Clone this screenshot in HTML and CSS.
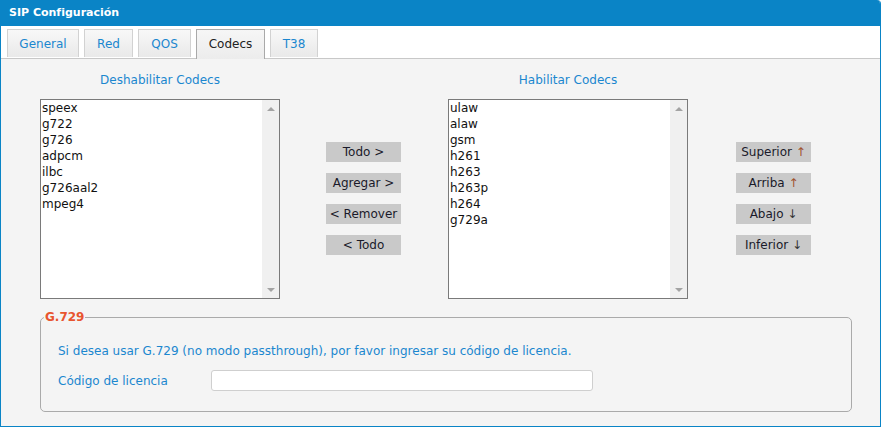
FILE: index.html
```html
<!DOCTYPE html>
<html lang="es">
<head>
    <meta charset="UTF-8">
    <meta name="viewport" content="width=device-width, initial-scale=1.0">
    <title>SIP Configuración</title>
    <link rel="stylesheet" href="styles.css">
</head>
<body>

    <div class="panel">
        <div class="panel-title">SIP Configuración</div>

        <!-- Tabs -->
        <ul class="tabs">
            <li class="tab">General</li>
            <li class="tab">Red</li>
            <li class="tab">QOS</li>
            <li class="tab active">Codecs</li>
            <li class="tab">T38</li>
        </ul>

        <div class="content">
            <!-- Codec lists -->
            <div class="codec-row">
                <div class="codec-col">
                    <div class="col-title">Deshabilitar Codecs</div>
                    <div class="codec-list">
                        <ul class="items">
                            <li>speex</li>
                            <li>g722</li>
                            <li>g726</li>
                            <li>adpcm</li>
                            <li>ilbc</li>
                            <li>g726aal2</li>
                            <li>mpeg4</li>
                        </ul>
                        <div class="scrollbar"><span class="arrow-up"></span><span class="arrow-down"></span></div>
                    </div>
                </div>

                <div class="btn-col">
                    <button class="move-btn">Todo &gt;</button>
                    <button class="move-btn">Agregar &gt;</button>
                    <button class="move-btn">&lt; Remover</button>
                    <button class="move-btn">&lt; Todo</button>
                </div>

                <div class="codec-col">
                    <div class="col-title">Habilitar Codecs</div>
                    <div class="codec-list">
                        <ul class="items">
                            <li>ulaw</li>
                            <li>alaw</li>
                            <li>gsm</li>
                            <li>h261</li>
                            <li>h263</li>
                            <li>h263p</li>
                            <li>h264</li>
                            <li>g729a</li>
                        </ul>
                        <div class="scrollbar"><span class="arrow-up"></span><span class="arrow-down"></span></div>
                    </div>
                </div>

                <div class="btn-col">
                    <button class="move-btn">Superior <span class="up">↑</span></button>
                    <button class="move-btn">Arriba <span class="up">↑</span></button>
                    <button class="move-btn">Abajo <span class="down">↓</span></button>
                    <button class="move-btn">Inferior <span class="down">↓</span></button>
                </div>
            </div>

            <!-- G.729 license -->
            <fieldset class="license">
                <legend>G.729</legend>
                <p class="note">Si desea usar G.729 (no modo passthrough), por favor ingresar su código de licencia.</p>
                <div class="field">
                    <label for="license-code">Código de licencia</label>
                    <input type="text" id="license-code">
                </div>
            </fieldset>
        </div>
    </div>

</body>
</html>
```

FILE: styles.css
```css
/* General */
body {
    font-family: 'DejaVu Sans', Verdana, sans-serif;
    font-size: 12px;
    margin: 0;
    padding: 0;
    background: #fff;
    color: #222;
}

.panel {
    width: 879px;
    height: 426px;
    border: 1px solid #0a84c6;
    border-top: none;
    border-radius: 0 4px 0 0;
    background: #f4f4f4;
    overflow: hidden;
}

.panel-title {
    height: 26px;
    line-height: 26px;
    padding-left: 8px;
    background: #0a84c6;
    color: #fff;
    font-weight: bold;
    font-size: 11px;
}

/* Tabs */
.tabs {
    display: flex;
    gap: 5px;
    list-style: none;
    margin: 0;
    padding: 3px 0 0 6px;
    height: 29px;
    background: #fff;
    border-bottom: 1px solid #c8c8c8;
}

.tab {
    height: 28px;
    line-height: 29px;
    padding: 0;
    text-align: center;
    border: 1px solid #d2d2d2;
    border-bottom: none;
    background: linear-gradient(#f8f8f8, #e9e9e9);
    color: #1b87cf;
    box-sizing: border-box;
}

.tab:nth-child(1) { width: 72px; }
.tab:nth-child(2) { width: 49px; }
.tab:nth-child(3) { width: 53px; }
.tab:nth-child(4) { width: 69px; }
.tab:nth-child(5) { width: 48px; }

.tab.active {
    height: 30px;
    border-color: #a9a9a9;
    background: linear-gradient(#f6f6f6, #ececec);
    color: #222;
    margin-bottom: -1px;
}

/* Codec lists */
.content {
    padding: 14px 0 0 39px;
}

.codec-row {
    display: flex;
    align-items: flex-start;
}

.codec-col {
    width: 240px;
}

.col-title {
    height: 14px;
    line-height: 14px;
    text-align: center;
    color: #1b87cf;
    margin-bottom: 12px;
}

.codec-list {
    display: flex;
    height: 198px;
    border: 1px solid #7a7a7a;
    background: #fff;
}

.items {
    flex: 1;
    list-style: none;
    margin: 0;
    padding: 0 1px;
}

.items li {
    height: 16px;
    line-height: 16px;
    color: #111;
}

.scrollbar {
    width: 17px;
    background: #f0f0f0;
    display: flex;
    flex-direction: column;
    justify-content: space-between;
    align-items: center;
    padding: 7px 0 6px;
}

.arrow-up,
.arrow-down {
    width: 0;
    height: 0;
    border-left: 4px solid transparent;
    border-right: 4px solid transparent;
}

.arrow-up {
    border-bottom: 4px solid #a3a3a3;
}

.arrow-down {
    border-top: 4px solid #a3a3a3;
}

/* Move buttons */
.btn-col {
    display: flex;
    flex-direction: column;
    gap: 11px;
    width: 75px;
    margin: 69px 47px 0 46px;
}

.btn-col:last-child {
    margin: 69px 0 0 48px;
}

.move-btn {
    height: 20px;
    padding: 0;
    border: none;
    background: #c9c9c9;
    font-family: 'DejaVu Sans', Verdana, sans-serif;
    font-size: 12px;
    color: #1a1a2a;
    white-space: nowrap;
    cursor: pointer;
}

.move-btn .up {
    color: #a0522d;
}

.move-btn .down {
    color: #333;
}

/* G.729 fieldset */
.license {
    width: 812px;
    height: 102px;
    box-sizing: border-box;
    margin: 11px 0 0 0;
    padding: 0 0 0 17px;
    border: 1px solid #aaa;
    border-radius: 5px;
}

.license legend {
    padding: 0 1px;
    margin-left: -14px;
    color: #e8552f;
    font-weight: bold;
    font-size: 12px;
}

.note {
    margin: 20px 0 0;
    line-height: 14px;
    color: #1b87cf;
}

.field {
    display: flex;
    align-items: center;
    margin-top: 12px;
}

.field label {
    width: 153px;
    color: #1b87cf;
}

.field input {
    width: 382px;
    height: 21px;
    box-sizing: border-box;
    border: 1px solid #cfcfcf;
    border-radius: 3px;
    background: #fff;
}
```
